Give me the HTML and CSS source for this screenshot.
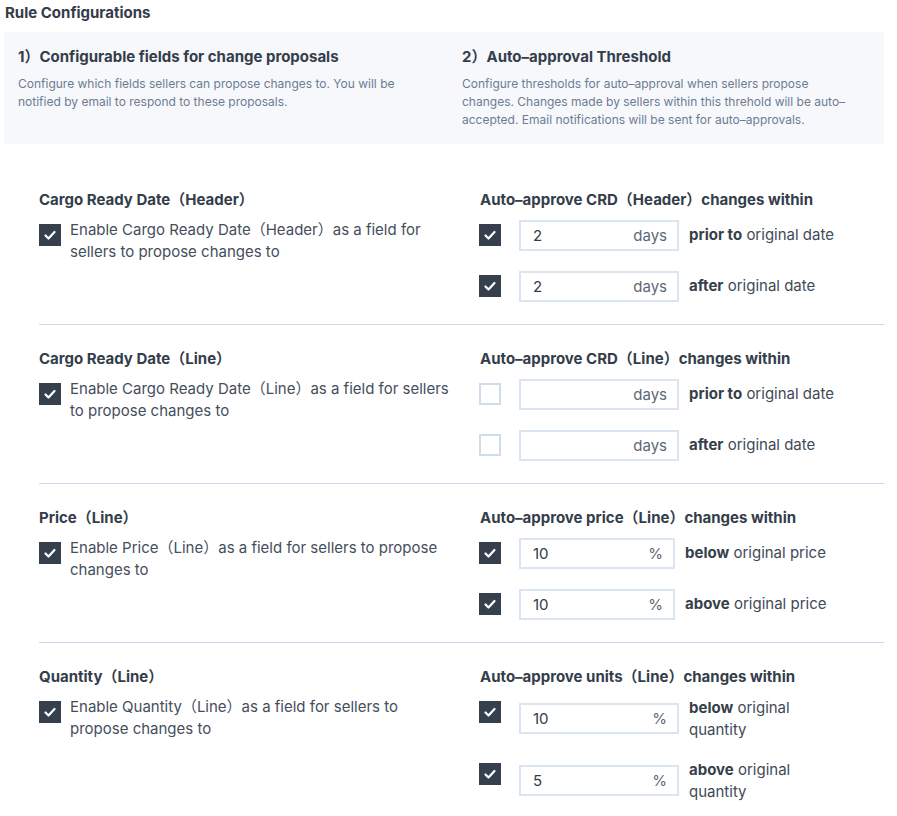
FILE: index.html
```html
<!DOCTYPE html>
<html>
<head>
<meta charset="utf-8">
<link rel="stylesheet" href="styles.css">
</head>
<body>
<div class="page">
  <h2 class="title">Rule Configurations</h2>
  <div class="intro">
    <div class="intro-col">
      <h3 class="intro-head">1）Configurable fields for change proposals</h3>
      <p class="intro-desc">Configure which fields sellers can propose changes to. You will be<br>notified by email to respond to these proposals.</p>
    </div>
    <div class="intro-col second">
      <h3 class="intro-head">2）Auto–approval Threshold</h3>
      <p class="intro-desc">Configure thresholds for auto–approval when sellers propose<br>changes. Changes made by sellers within this threhold will be auto–<br>accepted. Email notifications will be sent for auto–approvals.</p>
    </div>
  </div>

  <div class="rules">
    <section class="rule">
      <div class="rule-left">
        <h4 class="rule-head">Cargo Ready Date（Header）</h4>
        <div class="enable">
          <span class="cb on"><svg viewBox="0 0 22 22"><path d="M6.5 11.5l3 3 6-6.5"/></svg></span>
          <span class="enable-text">Enable Cargo Ready Date（Header）as a field for sellers to propose changes to</span>
        </div>
      </div>
      <div class="rule-right">
        <h4 class="rule-head">Auto–approve CRD（Header）changes within</h4>
        <div class="rows">
          <div class="row">
            <span class="cb on"><svg viewBox="0 0 22 22"><path d="M6.5 11.5l3 3 6-6.5"/></svg></span>
            <div class="field"><span class="val">2</span><span class="unit">days</span></div>
            <span class="desc"><b>prior to</b> original date</span>
          </div>
          <div class="row">
            <span class="cb on"><svg viewBox="0 0 22 22"><path d="M6.5 11.5l3 3 6-6.5"/></svg></span>
            <div class="field"><span class="val">2</span><span class="unit">days</span></div>
            <span class="desc"><b>after</b> original date</span>
          </div>
        </div>
      </div>
    </section>

    <section class="rule">
      <div class="rule-left">
        <h4 class="rule-head">Cargo Ready Date（Line）</h4>
        <div class="enable">
          <span class="cb on"><svg viewBox="0 0 22 22"><path d="M6.5 11.5l3 3 6-6.5"/></svg></span>
          <span class="enable-text">Enable Cargo Ready Date（Line）as a field for sellers to propose changes to</span>
        </div>
      </div>
      <div class="rule-right">
        <h4 class="rule-head">Auto–approve CRD（Line）changes within</h4>
        <div class="rows">
          <div class="row">
            <span class="cb"></span>
            <div class="field"><span class="val"></span><span class="unit">days</span></div>
            <span class="desc"><b>prior to</b> original date</span>
          </div>
          <div class="row">
            <span class="cb"></span>
            <div class="field"><span class="val"></span><span class="unit">days</span></div>
            <span class="desc"><b>after</b> original date</span>
          </div>
        </div>
      </div>
    </section>

    <section class="rule">
      <div class="rule-left">
        <h4 class="rule-head">Price（Line）</h4>
        <div class="enable">
          <span class="cb on"><svg viewBox="0 0 22 22"><path d="M6.5 11.5l3 3 6-6.5"/></svg></span>
          <span class="enable-text">Enable Price（Line）as a field for sellers to propose changes to</span>
        </div>
      </div>
      <div class="rule-right">
        <h4 class="rule-head">Auto–approve price（Line）changes within</h4>
        <div class="rows">
          <div class="row">
            <span class="cb on"><svg viewBox="0 0 22 22"><path d="M6.5 11.5l3 3 6-6.5"/></svg></span>
            <div class="field narrow"><span class="val">10</span><span class="unit">%</span></div>
            <span class="desc"><b>below</b> original price</span>
          </div>
          <div class="row">
            <span class="cb on"><svg viewBox="0 0 22 22"><path d="M6.5 11.5l3 3 6-6.5"/></svg></span>
            <div class="field narrow"><span class="val">10</span><span class="unit">%</span></div>
            <span class="desc"><b>above</b> original price</span>
          </div>
        </div>
      </div>
    </section>

    <section class="rule last">
      <div class="rule-left">
        <h4 class="rule-head">Quantity（Line）</h4>
        <div class="enable">
          <span class="cb on"><svg viewBox="0 0 22 22"><path d="M6.5 11.5l3 3 6-6.5"/></svg></span>
          <span class="enable-text">Enable Quantity（Line）as a field for sellers to propose changes to</span>
        </div>
      </div>
      <div class="rule-right">
        <h4 class="rule-head">Auto–approve units（Line）changes within</h4>
        <div class="rows compact">
          <div class="row tall">
            <span class="cb on"><svg viewBox="0 0 22 22"><path d="M6.5 11.5l3 3 6-6.5"/></svg></span>
            <div class="field"><span class="val">10</span><span class="unit">%</span></div>
            <span class="desc"><b>below</b> original quantity</span>
          </div>
          <div class="row tall">
            <span class="cb on"><svg viewBox="0 0 22 22"><path d="M6.5 11.5l3 3 6-6.5"/></svg></span>
            <div class="field"><span class="val">5</span><span class="unit">%</span></div>
            <span class="desc"><b>above</b> original quantity</span>
          </div>
        </div>
      </div>
    </section>
  </div>
</div>
</body>
</html>
```

FILE: styles.css
```css
* { box-sizing: border-box; }

html, body {
  margin: 0;
  padding: 0;
  background: #ffffff;
}

body {
  font-family: "Inter", "Noto Sans CJK SC", sans-serif;
  color: #3a4350;
  -webkit-font-smoothing: antialiased;
}

.page {
  padding: 0 13px 0 4px;
  width: 897px;
}

.title {
  margin: 0;
  padding-left: 1px;
  font-size: 15px;
  line-height: 26px;
  font-weight: 700;
  color: #333c48;
}

.intro {
  margin-top: 6px;
  background: #f6f8fc;
  display: grid;
  grid-template-columns: 440px 440px;
  padding: 15px 0;
  min-height: 111px;
}

.intro-col {
  padding-left: 14px;
  padding-right: 10px;
}

.intro-col.second {
  padding-left: 18px;
}

.intro-head {
  margin: 0;
  font-size: 15px;
  line-height: 20px;
  font-weight: 700;
  color: #343d4a;
}

.intro-desc {
  margin: 8px 0 0;
  font-size: 12px;
  line-height: 18px;
  color: #6d7c92;
  white-space: nowrap;
}

.rules {
  margin-left: 35px;
  margin-top: 22px;
}

.rule {
  display: grid;
  grid-template-columns: 441px 1fr;
  padding: 24px 0 22px;
  border-bottom: 1px solid #cbd9ea;
}

.rule.last {
  border-bottom: none;
}

.rule-head {
  margin: 0;
  font-size: 15px;
  line-height: 20px;
  font-weight: 700;
  color: #343d4a;
}

.enable {
  display: flex;
  align-items: flex-start;
  margin-top: 9px;
  padding-right: 30px;
}

.enable .cb {
  margin-top: 5px;
  margin-right: 9px;
}

.enable-text {
  font-size: 15px;
  line-height: 22px;
  color: #454e5b;
}

.cb {
  flex: none;
  width: 22px;
  height: 22px;
  border: 2px solid #d0dcec;
  background: #fff;
  display: flex;
  align-items: center;
  justify-content: center;
}

.cb.on {
  background: #363f4c;
  border-color: #363f4c;
}

.cb svg {
  width: 22px;
  height: 22px;
  flex: none;
}

.cb svg path {
  fill: none;
  stroke: #ffffff;
  stroke-width: 2.2;
  stroke-linecap: round;
  stroke-linejoin: round;
}

.rows {
  margin-top: 10px;
  display: flex;
  flex-direction: column;
  gap: 20px;
}

.rows.compact {
  gap: 18px;
}

.row {
  display: flex;
  align-items: flex-start;
}

.row .cb {
  margin-top: 4px;
  margin-left: -1px;
}

.field {
  margin-left: 18px;
  width: 160px;
  height: 31px;
  border: 2px solid #dbe5f2;
  background: #fff;
  display: flex;
  align-items: center;
  justify-content: space-between;
  padding: 0 10px 0 12px;
  font-size: 15px;
}

.field.narrow {
  width: 156px;
}

.val {
  color: #333b46;
}

.unit {
  color: #5d6775;
}

.desc {
  margin-left: 10px;
  margin-top: 4px;
  font-size: 15px;
  line-height: 22px;
  color: #414a57;
}

.desc b {
  font-weight: 700;
  color: #363f4b;
}

.row.tall .field {
  margin-top: 6px;
}

.row.tall .desc {
  margin-top: 0;
  width: 112px;
}
```
